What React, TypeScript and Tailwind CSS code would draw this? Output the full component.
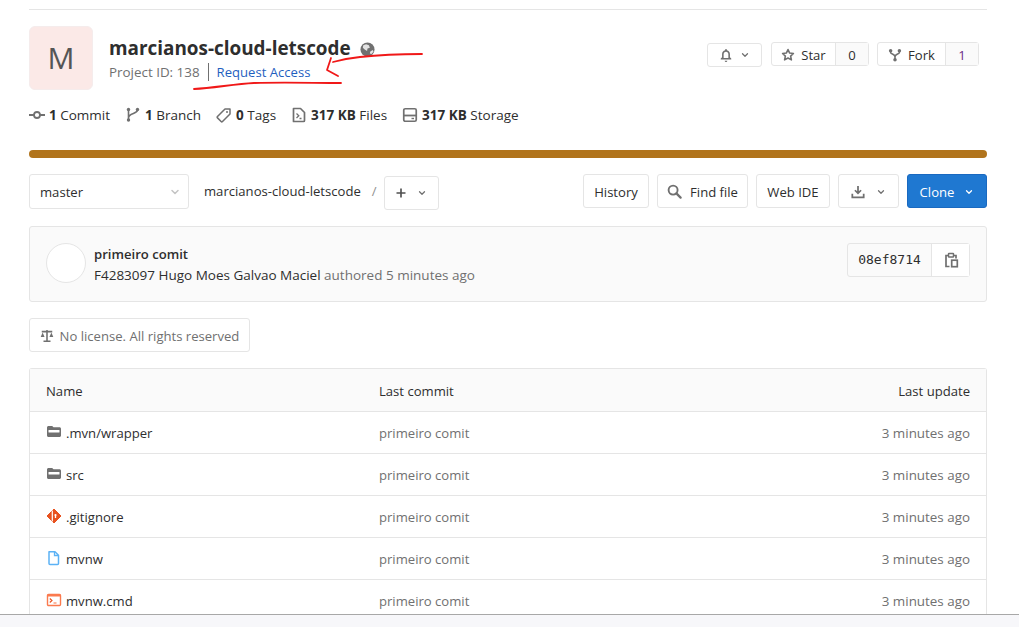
import type { ReactNode } from "react";

const font = "font-['Open_Sans','Noto_Sans',sans-serif]";

function Icon({ className, children }: { className?: string; children: ReactNode }) {
  return (
    <svg viewBox="0 0 16 16" fill="none" className={className}>
      {children}
    </svg>
  );
}

function Chevron({ className }: { className?: string }) {
  return (
    <Icon className={className}>
      <path d="M4 6l4 4 4-4" stroke="currentColor" strokeWidth="2" strokeLinecap="round" strokeLinejoin="round" />
    </Icon>
  );
}

function Stat({ icon, bold, label }: { icon: ReactNode; bold: string; label: string }) {
  return (
    <div className="flex items-center">
      {icon}
      <span className="ml-[4px] whitespace-nowrap text-[#2e2e2e]">
        <b className="font-bold">{bold}</b> {label}
      </span>
    </div>
  );
}

function Button({ className, children }: { className?: string; children: ReactNode }) {
  return (
    <div className={`flex h-[34px] items-center rounded-[3px] border border-[#e5e5e5] bg-white pt-px text-[#2e2e2e] ${className ?? ""}`}>
      {children}
    </div>
  );
}

function Counter({ icon, label, count, labelWidth, countColor }: {
  icon: ReactNode; label: string; count: string; labelWidth: string; countColor: string;
}) {
  return (
    <div className="flex h-[24px] rounded-[3px] border border-[#e5e5e5]">
      <div className={`flex items-center justify-center gap-[6px] border-r border-[#e5e5e5] pt-px ${labelWidth}`}>
        {icon}
        <span className="text-[#2e2e2e]">{label}</span>
      </div>
      <div className={`flex w-[32px] items-center justify-center bg-[#fafafa] pt-px ${countColor}`}>{count}</div>
    </div>
  );
}

function FolderIcon() {
  return (
    <Icon className="h-[16px] w-[16px]">
      <path d="M2.500 2h3.700l1.300 1.300h6c.8 0 1.500.7 1.500 1.500v6.700c0 .8-.7 1.500-1.500 1.500h-11C1.700 13 1 12.300 1 11.500v-8C1 2.700 1.700 2 2.500 2z" fill="#707070" />
      <rect x="2.500" y="6" width="11" height="2.500" rx=".5" fill="#fff" />
    </Icon>
  );
}

function GitIcon() {
  return (
    <Icon className="h-[16px] w-[16px]">
      <path d="M8 1l7 7-7 7-7-7z" fill="#e8521f" stroke="#e8521f" strokeLinejoin="round" />
      <path d="M6.300 2.500V13.500" stroke="#fff" strokeWidth="1.200" />
      <path d="M9.500 7v3" stroke="#fff" strokeWidth="1.300" />
      <circle cx="9.500" cy="7" r="1.100" fill="#fff" />
    </Icon>
  );
}

function FileIcon() {
  return (
    <Icon className="h-[16px] w-[16px]">
      <path d="M3 1.800h6l3.500 3.500v8.200a1 1 0 0 1-1 1h-7.500a1 1 0 0 1-1-1z" stroke="#5cb2f5" strokeWidth="1.500" strokeLinejoin="round" />
      <path d="M8.500 2v3.500H12" stroke="#5cb2f5" strokeWidth="1.300" />
    </Icon>
  );
}

function TerminalIcon() {
  return (
    <Icon className="h-[16px] w-[16px]">
      <rect x="1.500" y="2.500" width="13" height="11" rx="1" fill="#fff" stroke="#fb7a4e" strokeWidth="1.400" />
      <rect x="1.500" y="2.500" width="13" height="2" fill="#fb7a4e" />
      <path d="M3.800 6.500L6 8.500l-2.200 2" stroke="#e8521f" strokeWidth="1.100" />
      <path d="M7.500 11h3" stroke="#fb7a4e" strokeWidth="1.100" />
    </Icon>
  );
}

const files = [
  { name: ".mvn/wrapper", icon: <FolderIcon /> },
  { name: "src", icon: <FolderIcon /> },
  { name: ".gitignore", icon: <GitIcon /> },
  { name: "mvnw", icon: <FileIcon /> },
  { name: "mvnw.cmd", icon: <TerminalIcon /> },
];

export default function App() {
  return (
    <div className={`flex h-[627px] flex-col overflow-hidden bg-white text-[13.1px] leading-[20px] ${font}`}>
      <main className="relative flex-1 overflow-hidden px-[29px] pr-[32px] pt-[9px]">
        <div className="h-px bg-[#e5e5e5]" />

        <div className="mt-[16px] flex items-start">
          <div className="flex h-[64px] w-[64px] items-center justify-center rounded-[6px] border border-[#f5ecec] bg-[#fbe9e7] text-[30px] text-[#555]">
            M
          </div>
          <div className="ml-[16px] mt-[9px]">
            <div className="flex items-center">
              <h1 className="text-[18.9px] font-bold leading-[26px] text-[#2e2e2e]">marcianos-cloud-letscode</h1>
              <Icon className="ml-[9px] mt-[2px] h-[15px] w-[15px]">
                <circle cx="8" cy="8" r="7.500" fill="#707070" />
                <path d="M3.500 3.500l3-1 3 1 1 2.500-2.500 1-.5 2.500-2.500-1.500-2-2zM11 10l2.500-1.500 1 1.500-2.500 3-1.500-1z" fill="#e3e3e3" />
              </Icon>
            </div>
            <div className="mt-[1px] flex items-center text-[#707070]">
              <span className="text-[13.4px]">Project ID: 138</span>
              <span className="mx-[8px] h-[18px] w-px bg-[#707070]" />
              <span className="text-[#1f5fbf]">Request Access</span>
            </div>
          </div>
          <div className="ml-auto mt-[16px] flex items-start pr-[8px]">
            <div className="mt-px flex h-[24px] w-[55px] items-center justify-center gap-[7px] rounded-[3px] border border-[#e5e5e5]">
              <Icon className="h-[14px] w-[14px] text-[#707070]">
                <path d="M8 1a1 1 0 0 1 1 1v.6c2.300.5 3.500 2.300 3.500 4.400v3.500l1.500 1.500v1H2v-1l1.500-1.500V7c0-2.100 1.200-3.900 3.500-4.400V2a1 1 0 0 1 1-1zM6.500 14.500h3a1.500 1.500 0 0 1-3 0zM5.300 11.500h5.400V7c0-1.500-1-2.800-2.700-2.800S5.300 5.500 5.300 7z" fill="currentColor" />
              </Icon>
              <Chevron className="h-[10px] w-[10px] text-[#707070]" />
            </div>
            <div className="ml-[9px]">
              <Counter
                labelWidth="w-[64px]"
                countColor="text-[#2e2e2e]"
                label="Star"
                count="0"
                icon={
                  <Icon className="h-[14px] w-[14px] text-[#707070]">
                    <path d="M8 1.800l1.900 4 4.300.5-3.200 3 .9 4.300L8 11.500l-3.900 2.100.9-4.300-3.200-3 4.300-.5z" stroke="currentColor" strokeWidth="1.800" strokeLinejoin="round" />
                  </Icon>
                }
              />
            </div>
            <div className="ml-[8px]">
              <Counter
                labelWidth="w-[68px]"
                countColor="text-[#6b2a85]"
                label="Fork"
                count="1"
                icon={
                  <Icon className="h-[14px] w-[14px] text-[#707070]">
                    <circle cx="3" cy="3" r="2" fill="currentColor" />
                    <circle cx="13" cy="3" r="2" fill="currentColor" />
                    <circle cx="8" cy="13.500" r="2" fill="currentColor" />
                    <path d="M3 3v2c0 2 5 2 5 5v3M13 3v2c0 2-5 2-5 5" stroke="currentColor" strokeWidth="1.800" />
                  </Icon>
                }
              />
            </div>
          </div>
        </div>

        <div className="mt-[15px] flex h-[20px] items-center gap-[15px] text-[13.5px]">
          <Stat
            bold="1"
            label="Commit"
            icon={
              <Icon className="h-[16px] w-[16px] text-[#707070]">
                <circle cx="8" cy="8" r="3" stroke="currentColor" strokeWidth="1.800" />
                <path d="M0 8h5M11 8h5" stroke="currentColor" strokeWidth="1.800" />
              </Icon>
            }
          />
          <Stat
            bold="1"
            label="Branch"
            icon={
              <Icon className="h-[16px] w-[16px] text-[#707070]">
                <circle cx="3.500" cy="2.500" r="1.700" fill="currentColor" />
                <circle cx="3.500" cy="13" r="1.700" fill="currentColor" />
                <circle cx="12.500" cy="2.500" r="1.700" fill="currentColor" />
                <path d="M3.500 3v10M12.500 3c0 4-9 3-9 8" stroke="currentColor" strokeWidth="1.600" />
              </Icon>
            }
          />
          <Stat
            bold="0"
            label="Tags"
            icon={
              <Icon className="h-[16px] w-[16px] text-[#707070]">
                <path d="M9 2h5v5l-7.500 7.500a1 1 0 0 1-1.400 0L1.500 10.900a1 1 0 0 1 0-1.400z" stroke="currentColor" strokeWidth="1.500" strokeLinejoin="round" />
                <circle cx="11" cy="5" r="1" fill="currentColor" />
              </Icon>
            }
          />
          <Stat
            bold="317 KB"
            label="Files"
            icon={
              <Icon className="h-[16px] w-[16px] text-[#707070]">
                <path d="M2.500 1.500h7l4 4v8a1 1 0 0 1-1 1h-10z" stroke="currentColor" strokeWidth="1.700" strokeLinejoin="round" />
                <path d="M5.500 6.500l2.300 2.200-2.300 2.300M8.500 11.500h2" stroke="currentColor" strokeWidth="1.300" />
              </Icon>
            }
          />
          <Stat
            bold="317 KB"
            label="Storage"
            icon={
              <Icon className="h-[16px] w-[16px] text-[#707070]">
                <rect x="1.750" y="1.750" width="12.500" height="12.500" rx="1.500" stroke="currentColor" strokeWidth="1.700" />
                <path d="M2 8.500h12" stroke="currentColor" strokeWidth="1.800" />
                <path d="M9.500 11.500h2.500" stroke="currentColor" strokeWidth="1.400" />
              </Icon>
            }
          />
        </div>

        <div className="mt-[25px] h-[8px] rounded-full bg-[#b1741c]" />

        <div className="mt-[16px] flex items-start">
          <div className="flex h-[35px] w-[160px] items-center justify-between rounded-[3px] border border-[#e5e5e5] pl-[10px] pr-[7px] text-[#2e2e2e]">
            master
            <Chevron className="h-[12px] w-[12px] text-[#c4c4c4]" />
          </div>
          <span className="ml-[15px] mt-[7px] text-[#2e2e2e]">marcianos-cloud-letscode</span>
          <span className="ml-[11px] mt-[7px] text-[#909090]">/</span>
          <div className="ml-[7px] mt-[2px] flex h-[34px] w-[55px] items-center justify-center gap-[10px] rounded-[3px] border border-[#e5e5e5]">
            <Icon className="h-[12px] w-[12px] text-[#505050]">
              <path d="M8 2v12M2 8h12" stroke="currentColor" strokeWidth="2.200" />
            </Icon>
            <Chevron className="h-[10px] w-[10px] text-[#707070]" />
          </div>
          <div className="ml-auto flex gap-[8px]">
            <Button className="w-[66px] justify-center">History</Button>
            <Button className="w-[91px] justify-center gap-[8px]">
              <Icon className="h-[15px] w-[15px] text-[#707070]">
                <circle cx="6.500" cy="6.500" r="4.800" stroke="currentColor" strokeWidth="2" />
                <path d="M10 10l4.500 4.500" stroke="currentColor" strokeWidth="2.400" strokeLinecap="round" />
              </Icon>
              Find file
            </Button>
            <Button className="w-[74px] justify-center">Web IDE</Button>
            <Button className="w-[61px] justify-center gap-[11px]">
              <Icon className="h-[14px] w-[14px] text-[#707070]">
                <path d="M8 1v8M4.500 6L8 9.500 11.500 6M1.500 10v4h13v-4" stroke="currentColor" strokeWidth="2" />
              </Icon>
              <Chevron className="h-[10px] w-[10px] text-[#707070]" />
            </Button>
            <div className="flex h-[34px] w-[80px] items-center justify-center gap-[10px] rounded-[3px] border border-[#1a69c0] bg-[#1f78d1] pt-px text-white">
              Clone
              <Chevron className="h-[10px] w-[10px] text-white" />
            </div>
          </div>
        </div>

        <div className="mt-[16px] flex h-[76px] items-center rounded-[3px] border border-[#e5e5e5] bg-[#fafafa] pl-[16px] pr-[16px]">
          <div className="mb-[2px] h-[40px] w-[40px] rounded-full border border-[#e5e5e5] bg-white" />
          <div className="ml-[8px]">
            <div className="font-semibold text-[#2e2e2e]">primeiro comit</div>
            <div className="mt-px whitespace-nowrap text-[13.5px] text-[#2e2e2e]">
              F4283097 Hugo Moes Galvao Maciel <span className="text-[#707070]">authored 5 minutes ago</span>
            </div>
          </div>
          <div className="mb-[8px] ml-auto flex h-[34px] rounded-[3px] border border-[#e5e5e5]">
            <div className="flex w-[84px] items-center justify-center border-r border-[#e5e5e5] font-['DejaVu_Sans_Mono',monospace] text-[13px] text-[#2e2e2e]">
              08ef8714
            </div>
            <div className="flex w-[37px] items-center justify-center bg-white">
              <Icon className="h-[16px] w-[16px] text-[#707070]">
                <path d="M5 3.500H3v11h3.500M11 3.500h2v3" stroke="currentColor" strokeWidth="1.700" />
                <rect x="5.500" y="1.500" width="5" height="3.500" rx=".5" stroke="currentColor" strokeWidth="1.500" />
                <rect x="8.700" y="8.200" width="5.600" height="6.500" stroke="currentColor" strokeWidth="1.700" />
              </Icon>
            </div>
          </div>
        </div>

        <div className="mt-[16px] flex h-[34px] w-[221px] items-center justify-center gap-[6px] rounded-[3px] border border-[#e5e5e5] pt-px text-[#707070]">
          <Icon className="h-[14px] w-[14px] text-[#707070]">
            <path d="M8 1v13M4 14h8M2 3h12" stroke="currentColor" strokeWidth="1.800" />
            <path d="M3 4L.8 9h4.400zM13 4l-2.200 5h4.400z" fill="currentColor" />
          </Icon>
          No license. All rights reserved
        </div>

        <div className="mt-[16px] rounded-t-[3px] border border-b-0 border-[#e5e5e5]">
          <div className="grid h-[43px] grid-cols-[333px_1fr_180px] items-center border-b border-[#e5e5e5] bg-[#fafafa] px-[16px] pt-px text-[#2e2e2e]">
            <span>Name</span>
            <span>Last commit</span>
            <span className="text-right">Last update</span>
          </div>
          {files.map((file) => (
            <div key={file.name} className="grid h-[42px] grid-cols-[333px_1fr_180px] items-center border-b border-[#e5e5e5] px-[16px]">
              <div className="flex items-center gap-[4px] text-[#2e2e2e]">
                <span className="-mt-[1px] flex">{file.icon}</span>
                {file.name}
              </div>
              <span className="text-[#707070]">primeiro comit</span>
              <span className="text-right text-[13.4px] text-[#707070]">3 minutes ago</span>
            </div>
          ))}
        </div>

        {/* pen marks drawn over the screenshot */}
        <svg className="pointer-events-none absolute left-0 top-0 h-[120px] w-[500px]" viewBox="0 0 500 120" fill="none">
          <path d="M422 54c-22 0-44 1-62 3-10 1-20 3-27 5" stroke="#f01818" strokeWidth="1.800" strokeLinecap="round" />
          <path d="M331 58l-4 12 11 6" stroke="#f01818" strokeWidth="1.800" strokeLinecap="round" strokeLinejoin="round" />
          <path d="M194 89c20-1 40-5 60-6 30-1 60 0 87 0" stroke="#f01818" strokeWidth="1.800" strokeLinecap="round" />
        </svg>
      </main>
      <footer className="h-[13px] shrink-0 border-t border-[#a8a8a8] bg-[#f7f7fa]" />
    </div>
  );
}
